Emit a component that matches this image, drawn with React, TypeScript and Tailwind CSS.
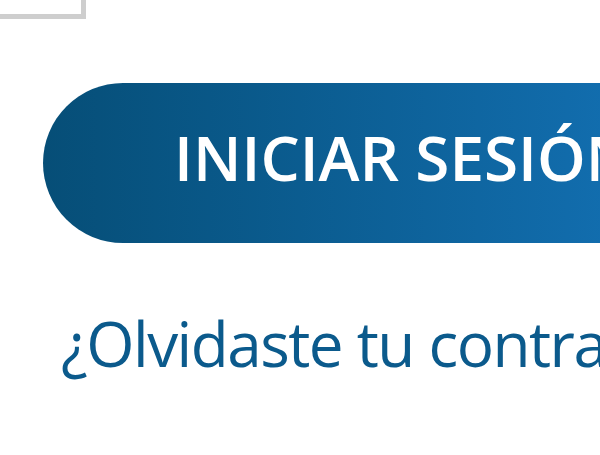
export default function App() {
  return (
    <div
      className="w-[600px] h-[455px] overflow-hidden bg-white"
      style={{ fontFamily: '"Open Sans", "Liberation Sans", sans-serif' }}
    >
      {/* input box corner peeking in */}
      <div className="w-[86px] h-[19px] border-r-[5px] border-b-[5px] border-[#cecece] bg-white" />

      {/* login button */}
      <div className="ml-[43px] mt-[64px] w-[700px] h-[160px] rounded-full bg-gradient-to-r from-[#064e77] to-[#1575bc] flex items-center pl-[131px] pb-[12px]">
        <span className="text-[62px] font-semibold text-white whitespace-nowrap leading-none">
          INICIAR SESIÓN
        </span>
      </div>

      {/* forgot password */}
      <div className="ml-[61px] mt-[69px] whitespace-nowrap text-[62px] leading-none tracking-[-1.5px] text-[#0b5a8c]">
        ¿Olvidaste tu contraseña?
      </div>
    </div>
  );
}
